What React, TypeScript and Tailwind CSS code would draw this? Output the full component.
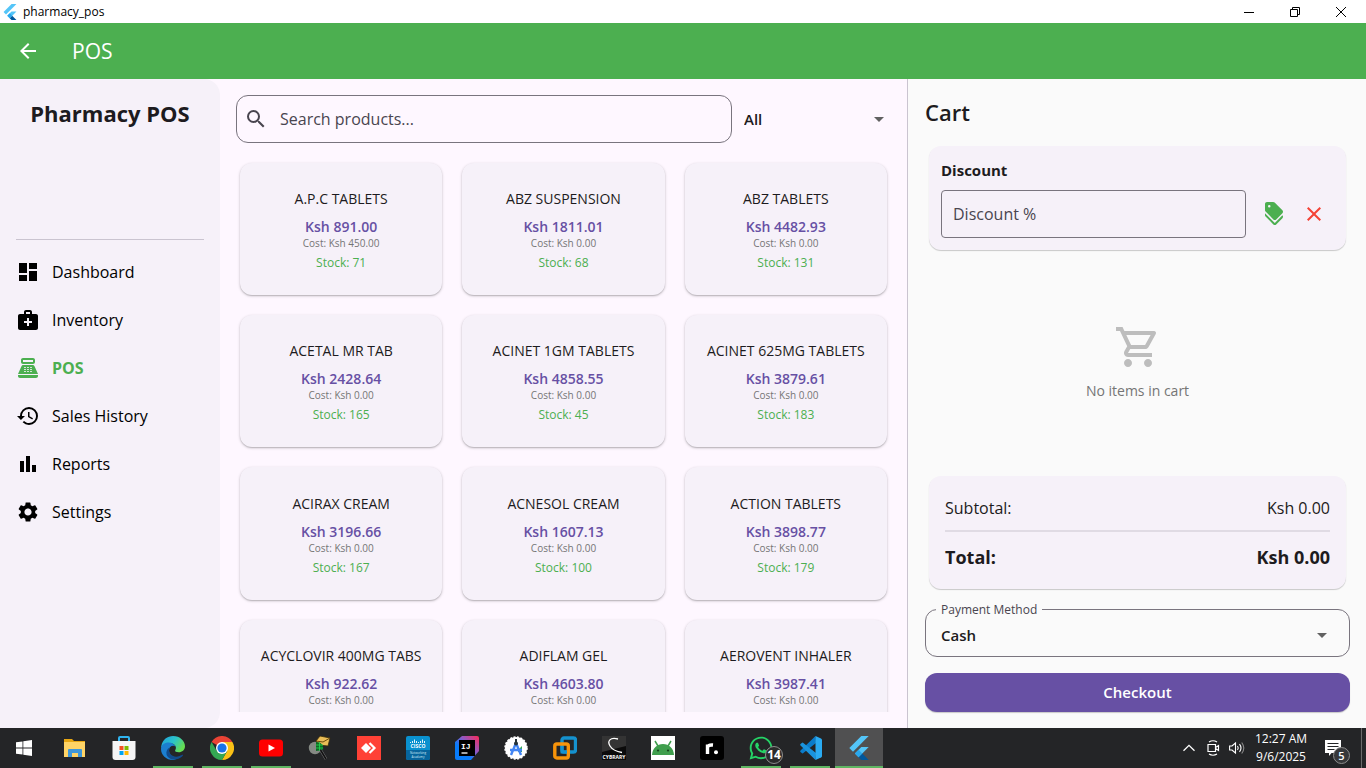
import { useState, type ReactNode } from "react";
import { FaWhatsapp } from "react-icons/fa";
import {
  MdArrowBack,
  MdArrowDropDown,
  MdBarChart,
  MdClose,
  MdDashboard,
  MdDiscount,
  MdHistory,
  MdMedicalServices,
  MdOutlineShoppingCart,
  MdPointOfSale,
  MdSearch,
  MdSettings,
} from "react-icons/md";

type Product = { name: string; price: string; cost: string; stock: number };

const products: Product[] = [
  { name: "A.P.C TABLETS", price: "891.00", cost: "450.00", stock: 71 },
  { name: "ABZ SUSPENSION", price: "1811.01", cost: "0.00", stock: 68 },
  { name: "ABZ TABLETS", price: "4482.93", cost: "0.00", stock: 131 },
  { name: "ACETAL MR TAB", price: "2428.64", cost: "0.00", stock: 165 },
  { name: "ACINET 1GM TABLETS", price: "4858.55", cost: "0.00", stock: 45 },
  { name: "ACINET 625MG TABLETS", price: "3879.61", cost: "0.00", stock: 183 },
  { name: "ACIRAX CREAM", price: "3196.66", cost: "0.00", stock: 167 },
  { name: "ACNESOL CREAM", price: "1607.13", cost: "0.00", stock: 100 },
  { name: "ACTION TABLETS", price: "3898.77", cost: "0.00", stock: 179 },
  { name: "ACYCLOVIR 400MG TABS", price: "922.62", cost: "0.00", stock: 94 },
  { name: "ADIFLAM GEL", price: "4603.80", cost: "0.00", stock: 120 },
  { name: "AEROVENT INHALER", price: "3987.41", cost: "0.00", stock: 58 },
];

const navItems = [
  { label: "Dashboard", icon: MdDashboard, active: false },
  { label: "Inventory", icon: MdMedicalServices, active: false },
  { label: "POS", icon: MdPointOfSale, active: true },
  { label: "Sales History", icon: MdHistory, active: false },
  { label: "Reports", icon: MdBarChart, active: false },
  { label: "Settings", icon: MdSettings, active: false },
];

function FlutterLogo({ className }: { className: string }) {
  return (
    <svg viewBox="0 0 24 24" className={className} aria-hidden="true">
      <path d="M14.3 0 2.3 12 6 15.7 21.7 0z" fill="#54c5f8" />
      <path d="M14.3 11.1 7.9 17.5l3.7 3.7L21.7 11.1z" fill="#54c5f8" />
      <path d="m11.6 21.2 3.7-3.7 6.4 6.5h-7.4z" fill="#01579b" />
      <path d="m7.9 17.5 3.7-3.7 3.7 3.7-3.7 3.7z" fill="#29a8ee" />
    </svg>
  );
}

function TitleBar() {
  return (
    <header className="flex h-[23px] shrink-0 items-center bg-white pr-[2px] pl-[2px]">
      <FlutterLogo className="h-4 w-4" />
      <span className="ml-[5px] text-xs leading-4 text-black">pharmacy_pos</span>
      <div className="ml-auto flex h-full">
        <button type="button" aria-label="Minimize" className="flex w-[46px] items-center justify-center">
          <svg viewBox="0 0 10 10" className="h-[10px] w-[10px]" stroke="#000" fill="none">
            <path d="M0 5.5h10" />
          </svg>
        </button>
        <button type="button" aria-label="Restore" className="flex w-[46px] items-center justify-center">
          <svg viewBox="0 0 10 10" className="h-[10px] w-[10px]" stroke="#000" fill="none">
            <path d="M.5 2.5h7v7h-7zM2.500 2.500v-2h7v7h-2" />
          </svg>
        </button>
        <button type="button" aria-label="Close" className="flex w-[46px] items-center justify-center">
          <svg viewBox="0 0 10 10" className="h-[10px] w-[10px]" stroke="#000" fill="none">
            <path d="m0 0 10 10M10 0 0 10" />
          </svg>
        </button>
      </div>
    </header>
  );
}

function AppBar() {
  return (
    <div className="flex h-14 shrink-0 items-center bg-[#4caf50] text-white">
      <button type="button" aria-label="Back" className="flex h-14 w-14 items-center justify-center">
        <MdArrowBack className="h-6 w-6" />
      </button>
      <h1 className="ml-4 text-[21px] leading-7">POS</h1>
    </div>
  );
}

function Sidebar() {
  return (
    <aside className="w-[220px] shrink-0 rounded-r-2xl bg-[#f6f1f9]">
      <div className="mx-4 mb-2 h-[161px] border-b border-[#cac4d0] pt-5">
        <h2 className="whitespace-nowrap text-center text-[22px] leading-7 font-bold text-[#1d1b20]">Pharmacy POS</h2>
      </div>
      <nav>
        {navItems.map(({ label, icon: Icon, active }) => (
          <a
            key={label}
            href="#"
            className={
              active
                ? "flex h-12 items-center px-4 text-base font-bold text-[#4caf50]"
                : "flex h-12 items-center px-4 text-base text-black"
            }
          >
            <Icon className="h-6 w-6" />
            <span className="ml-3">{label}</span>
          </a>
        ))}
      </nav>
    </aside>
  );
}

function ProductCard({ product }: { product: Product }) {
  return (
    <div className="aspect-3/2 p-1">
      <button
        type="button"
        className="flex h-full w-full flex-col items-center justify-center rounded-xl bg-[#f6f1f9] pt-1 shadow-[0_1px_3px_rgba(0,0,0,0.22),0_1px_1px_rgba(0,0,0,0.12)]"
      >
        <span className="text-sm leading-5 font-medium text-[#1d1b20]">{product.name}</span>
        <span className="mt-2 text-sm leading-5 font-semibold text-[#6750a4]">Ksh {product.price}</span>
        <span className="text-[10px] leading-3 text-[#757575]">Cost: Ksh {product.cost}</span>
        <span className="mt-1 text-xs leading-5 text-[#4caf50]">Stock: {product.stock}</span>
      </button>
    </div>
  );
}

function Catalog() {
  const [query, setQuery] = useState("");
  const shown = products.filter((p) => p.name.toLowerCase().includes(query.toLowerCase()));
  return (
    <main className="flex min-w-0 flex-1 flex-col p-4">
      <div className="flex h-12 shrink-0 items-center gap-3">
        <label className="flex h-12 min-w-0 flex-3 items-center rounded-xl border border-[#79747e] pl-[7px]">
          <MdSearch className="h-6 w-6 shrink-0 text-[#49454f]" />
          <input
            type="text"
            aria-label="Search products"
            placeholder="Search products..."
            value={query}
            onChange={(e) => setQuery(e.target.value)}
            className="ml-3 h-10 min-w-0 flex-1 bg-transparent text-base outline-none placeholder:text-[#49454f]"
          />
        </label>
        <div className="grid w-[147px] items-center">
          <select
            aria-label="Category"
            className="col-start-1 row-start-1 h-12 w-full appearance-none bg-transparent text-[15px] font-semibold text-[#1d1b20] outline-none"
          >
            <option>All</option>
          </select>
          <MdArrowDropDown className="pointer-events-none col-start-1 row-start-1 h-6 w-6 justify-self-end text-[#616161]" />
        </div>
      </div>
      <div className="mt-4 grid min-h-0 flex-1 grid-cols-3 content-start gap-3 overflow-hidden">
        {shown.map((p) => (
          <ProductCard key={p.name} product={p} />
        ))}
      </div>
    </main>
  );
}

function Cart() {
  return (
    <section className="flex w-1/3 max-w-[459px] shrink-0 grow flex-col border-l border-[#cac4d0] bg-[#fafafa] p-4 pl-[17px] text-[#1d1b20]">
      <h2 className="text-[22px] leading-[35px] font-semibold">Cart</h2>
      <div className="mx-1 mt-4 rounded-xl bg-[#f6f1f9] p-3 shadow-[0_1px_1px_rgba(0,0,0,0.2)]">
        <label htmlFor="discount" className="block text-[15px] leading-6 font-bold">
          Discount
        </label>
        <div className="mt-2 flex items-center">
          <input
            id="discount"
            type="text"
            placeholder="Discount %"
            className="mr-2 h-12 min-w-0 flex-1 rounded border border-[#79747e] bg-transparent px-[11px] text-base outline-none placeholder:text-[#49454f]"
          />
          <button type="button" aria-label="Apply discount" className="flex h-10 w-10 items-center justify-center">
            <MdDiscount className="h-6 w-6 text-[#4caf50]" />
          </button>
          <button type="button" aria-label="Clear discount" className="flex h-10 w-10 items-center justify-center">
            <MdClose className="h-6 w-6 text-[#f44336]" />
          </button>
        </div>
      </div>

      <div className="flex min-h-0 flex-1 flex-col items-center justify-center">
        <MdOutlineShoppingCart className="h-12 w-12 text-[#bdbdbd]" />
        <p className="mt-2 text-sm leading-6 text-[#757575]">No items in cart</p>
      </div>

      <dl className="mx-1 rounded-xl bg-[#f6f1f9] p-4 shadow-[0_1px_1px_rgba(0,0,0,0.2)]">
        <div className="flex h-10 items-center justify-between border-b-2 border-[#e0dbe4] pb-[6px] text-base">
          <dt>Subtotal:</dt>
          <dd>Ksh 0.00</dd>
        </div>
        <div className="flex h-[41px] items-center justify-between pt-2 text-lg font-bold">
          <dt>Total:</dt>
          <dd>Ksh 0.00</dd>
        </div>
      </dl>

      <fieldset className="mt-[11px] rounded-xl border border-[#79747e] pr-[15px] pl-[10px]">
        <legend className="px-[5px] pt-[2px] text-xs leading-4 text-[#49454f]">
          <label htmlFor="payment">Payment Method</label>
        </legend>
        <div className="grid items-center">
          <select
            id="payment"
            className="col-start-1 row-start-1 mb-1 h-[34px] w-full appearance-none bg-transparent pl-[5px] text-[15px] font-semibold outline-none"
          >
            <option>Cash</option>
          </select>
          <MdArrowDropDown className="pointer-events-none col-start-1 row-start-1 mb-1 h-6 w-6 justify-self-end text-[#616161]" />
        </div>
      </fieldset>
      <button
        type="button"
        className="mt-4 h-[39px] shrink-0 rounded-xl bg-[#6750a4] text-[15px] font-semibold text-white shadow-[0_1px_1px_rgba(0,0,0,0.2)]"
      >
        Checkout
      </button>
    </section>
  );
}

function Logo({ children }: { children: ReactNode }) {
  return (
    <svg viewBox="0 0 24 24" className="h-6 w-6" aria-hidden="true">
      {children}
    </svg>
  );
}

const taskbarApps: { name: string; open?: boolean; focused?: boolean; icon: ReactNode }[] = [
  {
    name: "File Explorer",
    icon: (
      <Logo>
        <path d="M1 3h8l2 2h11v15H1z" fill="#e8a713" />
        <path d="M1 6h21v15H1z" fill="#ffd466" />
        <path d="M5 21v-7q0-1 1-1h12q1 0 1 1v7h-4v-4H9v4z" fill="#3f97d9" />
      </Logo>
    ),
  },
  {
    name: "Microsoft Store",
    icon: (
      <Logo>
        <path d="M7 6V2q0-1 1-1h8q1 0 1 1v4" fill="none" stroke="#2fb4f0" strokeWidth="2" />
        <path d="M.5 5h23v16q0 3-3 3h-17q-3 0-3-3z" fill="#f5f5f5" />
        <path d="M7.500 10h4v4h-4z" fill="#f25022" />
        <path d="M12.500 10h4v4h-4z" fill="#7fba00" />
        <path d="M7.500 15h4v4h-4z" fill="#00a4ef" />
        <path d="M12.500 15h4v4h-4z" fill="#ffb900" />
      </Logo>
    ),
  },
  {
    name: "Microsoft Edge",
    open: true,
    icon: (
      <Logo>
        <defs>
          <linearGradient id="edgeTop" x1="0" x2="1" y1="0" y2=".5">
            <stop offset="0" stopColor="#1fa0e0" />
            <stop offset=".55" stopColor="#2bc3c9" />
            <stop offset="1" stopColor="#66dd52" />
          </linearGradient>
        </defs>
        <path d="M.3 10C1.500 3.500 6.500 0 12 0c7 0 12 5 12 10.200 0 3.800-3 6-6.200 6-2.600 0-4.300-1-3.600-2 1.600-2.200.6-6.200-3.700-6.700C6 7 1.500 8 .3 12z" fill="url(#edgeTop)" />
        <path d="M0 13c0-4 3.500-6.500 7.500-6.500 3.500 0 6 1.800 7 4-3-2-6.500.3-6.500 4 0 4.500 4 7.500 8.500 7.200C15 23 13.500 24 12 24 5 24 0 19 0 13z" fill="#1c7fd0" />
        <path d="M8.700 11.500c-2.500 6 3.300 11 9.800 8.500 1.500-.6 3-1.500 3.500-1.200.5.400-1.500 2.700-4.500 4-6.500 2.500-13-1.500-12-7 .3-1.800 1.500-3.300 3.200-4.300z" fill="#114a8b" />
      </Logo>
    ),
  },
  {
    name: "Google Chrome",
    open: true,
    icon: (
      <Logo>
        <path d="M12 12 1.600 6A12 12 0 0 1 22.400 6z" fill="#ea4335" />
        <path d="M12 6h10.400A12 12 0 0 1 12 24l5.200-9z" fill="#fbc116" />
        <path d="M6.800 15 1.600 6A12 12 0 0 0 12 24l5.200-9z" fill="#34a853" />
        <circle cx="12" cy="12" r="6" fill="#fff" />
        <circle cx="12" cy="12" r="4.600" fill="#1a73e8" />
      </Logo>
    ),
  },
  {
    name: "YouTube",
    open: true,
    icon: (
      <Logo>
        <rect y="3.500" width="24" height="17" rx="3.500" fill="#f00" />
        <path d="m9.500 8.500 6.500 3.500-6.500 3.500z" fill="#fff" />
      </Logo>
    ),
  },
  {
    name: "Mail inspector",
    icon: (
      <Logo>
        <path d="m8 5 4-5 10 2-2 8-9-1z" fill="#e9bd57" stroke="#3a2c0a" strokeWidth=".8" />
        <path d="m8 5 7 1 7-4" fill="none" stroke="#6b4b0e" />
        <circle cx="7" cy="12" r="6.200" fill="#858a84" />
        <path d="M8 6c5 0 8 3 7 8l-7 1z" fill="#0d6b25" />
        <path d="M8 9h7M8 12h7M11.500 6v9" stroke="#27dd52" strokeWidth=".8" />
        <path d="m12.500 14 5.500 9" stroke="#77777a" strokeWidth="2.600" />
        <path d="m12.500 14 5.500 9" stroke="#111" strokeWidth="1.600" />
      </Logo>
    ),
  },
  {
    name: "AnyDesk",
    icon: (
      <Logo>
        <path d="M0 0h24v24H0z" fill="#ff4136" />
        <path d="m4 12 5-5 5 5-5 5z" fill="#fff" />
        <path d="m12.500 7 5 5-5 5" fill="none" stroke="#fff" strokeWidth="2.200" />
      </Logo>
    ),
  },
  {
    name: "Cisco Networking Academy",
    icon: (
      <Logo>
        <rect width="24" height="24" rx="2" fill="#0a91cf" />
        <path d="M0 14h24v8q0 2-2 2H2q-2 0-2-2z" fill="#07659d" />
        <path d="M4.500 6v1M6.500 5v2M8.500 3.500V7M10.500 5v2M12.500 6v1M14.500 5v2M16.500 3.500V7M18.500 5v2" stroke="#fff" strokeWidth=".9" />
        <text x="12" y="12" textAnchor="middle" fontSize="5" fontWeight="700" fill="#fff">CISCO</text>
        <text x="12" y="18" textAnchor="middle" fontSize="3" fill="#d7edf8">Networking</text>
        <text x="12" y="22" textAnchor="middle" fontSize="3" fill="#d7edf8">Academy</text>
      </Logo>
    ),
  },
  {
    name: "IntelliJ IDEA",
    icon: (
      <Logo>
        <defs>
          <linearGradient id="ij" x1="0" x2="1" y1="1" y2="0">
            <stop offset=".35" stopColor="#087cfa" />
            <stop offset=".6" stopColor="#8a5bc8" />
            <stop offset="1" stopColor="#fe2857" />
          </linearGradient>
        </defs>
        <path d="M7 0h15q2 0 2 2v13l-8 9H2q-2 0-2-2V6z" fill="url(#ij)" />
        <path d="M4 4h16v16H4z" fill="#000" />
        <text x="6" y="13" fontSize="8" fontWeight="700" fill="#fff" className="font-['Liberation_Mono',monospace]">IJ</text>
        <path d="M6.500 17h6" fill="none" stroke="#fff" strokeWidth="1.300" />
      </Logo>
    ),
  },
  {
    name: "Android Studio",
    icon: (
      <Logo>
        <circle cx="12" cy="12" r="11" fill="#fff" stroke="#fff" strokeWidth="1.500" strokeDasharray="2 1.500" />
        <path d="m14 14 4-4v6h-4z" fill="#34a853" />
        <path d="M12 7 7 19M12 7l5 12M6 14h12" fill="none" stroke="#4285f4" strokeWidth="2.400" />
        <path d="M12 3v3" stroke="#263238" strokeWidth="2" />
        <circle cx="12" cy="7.500" r="2" fill="#263238" />
      </Logo>
    ),
  },
  {
    name: "VMware Workstation",
    icon: (
      <Logo>
        <rect x="9" y="2" width="13.500" height="14" rx="2" fill="none" stroke="#1592cf" strokeWidth="3.400" />
        <rect x="1.800" y="8" width="13.500" height="14" rx="2" fill="none" stroke="#f8940a" strokeWidth="3.400" />
        <path d="M9 10v6h5" fill="none" stroke="#1592cf" strokeWidth="3" />
      </Logo>
    ),
  },
  {
    name: "Cybrary",
    icon: (
      <Logo>
        <path d="M0 0h24v24H0z" fill="#0b0b0b" />
        <path d="M0 0h24v10L0 16z" fill="#343434" />
        <path d="M16 3C8 1 5 5 8 10q3 5 12 6.500" fill="none" stroke="#fff" strokeWidth="1.300" />
        <text x="12" y="22.500" textAnchor="middle" fontSize="5" fontWeight="700" fill="#fff">CYBRARY</text>
      </Logo>
    ),
  },
  {
    name: "Android emulator",
    icon: (
      <Logo>
        <path d="M0 0h24v24H0z" fill="#fff" />
        <path d="M1 19C1.500 12 6 8 12 8s10.500 4 11 11z" fill="#3f9e4d" />
        <path d="M7 10 4 5M17 10l3-5" stroke="#3f9e4d" strokeWidth="1.500" />
        <circle cx="7" cy="14.500" r="1.100" fill="#17421e" />
        <circle cx="17" cy="14.500" r="1.100" fill="#17421e" />
      </Logo>
    ),
  },
  {
    name: "Roadmap",
    icon: (
      <Logo>
        <rect width="24" height="24" rx="3" fill="#000" />
        <path d="M7.500 18V8.500M7.500 12q0-3.500 5.500-3" fill="none" stroke="#fff" strokeWidth="3.400" />
        <circle cx="16" cy="16.300" r="2" fill="#fff" />
      </Logo>
    ),
  },
  {
    name: "WhatsApp",
    open: true,
    icon: (
      <>
        <FaWhatsapp className="h-[26px] w-[26px] text-[#25d366]" />
        <span className="absolute right-[2px] bottom-1 flex h-[18px] w-[18px] items-center justify-center rounded-full border border-[#8d8d8d] bg-[#2b2b2b] text-xs leading-none font-bold text-white">
          14
        </span>
      </>
    ),
  },
  {
    name: "Visual Studio Code",
    open: true,
    icon: (
      <Logo>
        <path d="m17.500 0-15 14.500c-.5.500-.5 1 0 1.400l1.300 1.200q.6.500 1.200.1L18 7z" fill="#0a7ccb" />
        <path d="m17.500 24-15-14.500c-.5-.5-.5-1 0-1.400l1.300-1.200q.6-.5 1.200-.1L18 17z" fill="#1a93dd" />
        <path d="M17.500 0 23 2.500q1 .5 1 1.500v16q0 1-1 1.500L17.500 24z" fill="#2aabf2" />
      </Logo>
    ),
  },
  { name: "pharmacy_pos", open: true, focused: true, icon: <FlutterLogo className="h-6 w-6" /> },
];

function Taskbar() {
  return (
    <footer className="flex h-10 shrink-0 items-stretch bg-[#242527] text-white">
      <button type="button" aria-label="Start" className="mr-[3px] flex w-12 items-center justify-center">
        <svg viewBox="0 0 16 16" className="h-4 w-4" fill="#fff" aria-hidden="true">
          <path d="M0 2.300 6.500 1.400v6.200H0zM7.300 1.300 16 0v7.600H7.300zM0 8.400h6.500v6.200L0 13.700zM7.300 8.400H16V16l-8.700-1.300z" />
        </svg>
      </button>
      <div className="flex gap-px">
        {taskbarApps.map((app) => (
          <button
            key={app.name}
            type="button"
            aria-label={app.name}
            className={
              app.focused
                ? "relative flex w-12 items-center justify-center bg-[#505051]"
                : "relative flex w-12 items-center justify-center"
            }
          >
            {app.icon}
            {app.open && (
              <span
                className={
                  app.focused
                    ? "absolute inset-x-0 bottom-0 h-[2px] bg-[#5fb562]"
                    : "absolute inset-x-1 bottom-0 h-[2px] bg-[#5fb562]"
                }
              />
            )}
          </button>
        ))}
      </div>
      <div className="ml-auto flex items-center">
        <button type="button" aria-label="Show hidden icons" className="flex w-6 justify-center">
          <svg viewBox="0 0 12 8" className="h-2 w-3" fill="none" stroke="#fff" strokeWidth="1.300">
            <path d="m.5 6.800 5.500-5.500 5.500 5.500" />
          </svg>
        </button>
        <button type="button" aria-label="Meet now" className="flex w-6 justify-center">
          <svg viewBox="0 0 16 16" className="h-4 w-4" fill="none" stroke="#fff" strokeWidth="1.200">
            <path d="M3 4.500h7.500v7H3zM10.500 7.500l3-2v5l-3-2M4 2q4-2.500 8 0M4 14q4 2.500 8 0" />
          </svg>
        </button>
        <button type="button" aria-label="Volume" className="flex w-6 justify-center">
          <svg viewBox="0 0 16 16" className="h-4 w-4" fill="none" stroke="#fff" strokeWidth="1.100">
            <path d="M.6 6h2.400l3.500-3v10L3 10H.6zM8.500 6q1.500 2 0 4M10.500 4.200q3 3.800 0 7.600" />
            <path d="M12.700 2.500q4.200 5.500 0 11" stroke="#8b8b8b" />
          </svg>
        </button>
        <div className="w-16 text-center text-xs leading-[18px] whitespace-nowrap">
          <div>12:27 AM</div>
          <div>9/6/2025</div>
        </div>
        <button type="button" aria-label="Notifications" className="relative flex h-10 w-12 items-center justify-center pr-2">
          <svg viewBox="0 0 16 16" className="h-4 w-4" aria-hidden="true">
            <path d="M0 0h16v13H6.500L4 16v-3H0z" fill="#fff" />
            <path d="M2.500 3.500h11M2.500 6.500h11M2.500 9.500h7" stroke="#242527" />
          </svg>
          <span className="absolute right-[11px] bottom-1 flex h-[17px] w-[17px] items-center justify-center rounded-full border border-[#8d8d8d] bg-[#37383a] text-[11px] leading-none font-semibold">
            5
          </span>
        </button>
        <span className="mr-1 h-10 w-px bg-[#6a6a6a]" />
      </div>
    </footer>
  );
}

export default function App() {
  return (
    <div className="flex h-screen flex-col overflow-hidden bg-[#fef7ff] font-['Open_Sans','Noto_Sans',sans-serif] text-[#1d1b20]">
      <TitleBar />
      <AppBar />
      <div className="flex min-h-0 flex-1">
        <Sidebar />
        <Catalog />
        <Cart />
      </div>
      <Taskbar />
    </div>
  );
}
